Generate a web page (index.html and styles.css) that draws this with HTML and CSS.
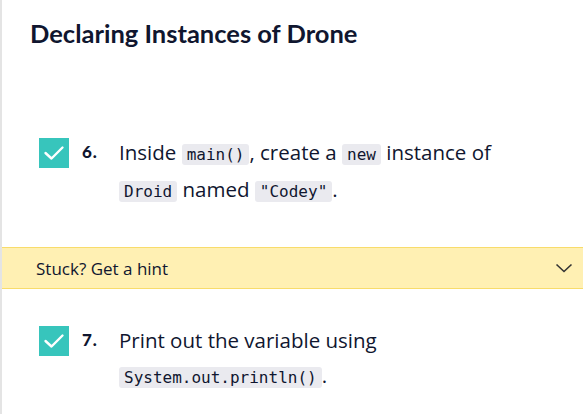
FILE: index.html
```html
<!DOCTYPE html>
<html>
<head>
<meta charset="utf-8">
<link rel="stylesheet" href="styles.css">
</head>
<body>
<div class="page">
  <h1 class="title">Declaring Instances of Drone</h1>
  <div class="task task-6">
    <span class="check"><svg width="30" height="30" viewBox="0 0 30 30"><path d="M6.5 15 L12.5 20.5 L23.5 9.5" fill="none" stroke="#fff" stroke-width="2.4" stroke-linecap="round" stroke-linejoin="round"/></svg></span>
    <span class="num">6.</span>
    <p class="text">Inside <code>main()</code>, create a <code>new</code> instance of <code>Droid</code> named <code>"Codey"</code>.</p>
  </div>
  <div class="hint">
    <span class="hint-label">Stuck? Get a hint</span>
    <svg class="chevron" width="18" height="10" viewBox="0 0 18 10"><path d="M1.5 1.5 L9 8.5 L16.5 1.5" fill="none" stroke="#333" stroke-width="1.6"/></svg>
  </div>
  <div class="task task-7">
    <span class="check"><svg width="30" height="30" viewBox="0 0 30 30"><path d="M6.5 15 L12.5 20.5 L23.5 9.5" fill="none" stroke="#fff" stroke-width="2.4" stroke-linecap="round" stroke-linejoin="round"/></svg></span>
    <span class="num">7.</span>
    <p class="text">Print out the variable using <code>System.out.println()</code>.</p>
  </div>
</div>
</body>
</html>
```
FILE: styles.css
```css
html, body {
  margin: 0;
  padding: 0;
  background: #fff;
}
.page {
  border-left: 2px solid #e4e4e4;
  min-height: 414px;
  box-sizing: border-box;
  font-family: "Open Sans", "Noto Sans", sans-serif;
  color: #10162f;
}
.title {
  margin: 0;
  padding: 16px 0 0 28px;
  font-family: Lato, "Open Sans", sans-serif;
  font-size: 25.5px;
  line-height: 34px;
  font-weight: 700;
}
.task {
  display: flex;
  align-items: flex-start;
  padding-left: 37px;
}
.task-6 {
  margin-top: 88px;
}
.task-7 {
  margin-top: 37px;
}
.check {
  flex: none;
  width: 30px;
  height: 30px;
  background: #37c5bc;
  display: flex;
}
.num {
  flex: none;
  width: 37px;
  margin-left: 13px;
  margin-top: -1px;
  font-family: Lato, sans-serif;
  font-weight: 900;
  font-size: 17px;
  letter-spacing: 1px;
  line-height: 30px;
}
.text {
  margin: 0;
  font-size: 20.5px;
  line-height: 35px;
  margin-top: -3px;
  max-width: 420px;
}
code {
  font-family: "DejaVu Sans Mono", monospace;
  font-size: 16px;
  background: #eaeaef;
  border-radius: 3px;
  padding: 1px 5px;
}
.hint {
  margin-top: 38px;
  height: 40px;
  background: #fff0b3;
  border-top: 1px solid #f8dc6b;
  border-bottom: 1px solid #f8dc6b;
  display: flex;
  align-items: center;
  justify-content: space-between;
  padding: 0 10px 0 34px;
  font-size: 17px;
}
.chevron {
  display: block;
}
```
